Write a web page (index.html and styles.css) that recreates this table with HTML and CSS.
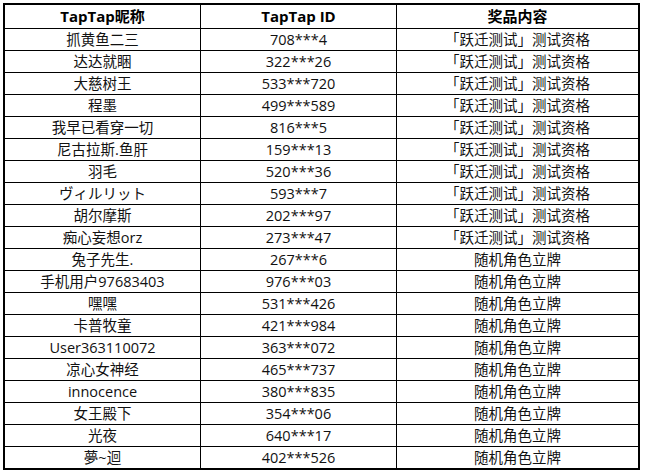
FILE: index.html
```html
<!DOCTYPE html>
<html>
<head>
<meta charset="utf-8">
<link rel="stylesheet" href="styles.css">
</head>
<body>
<table class="prize">
  <thead>
    <tr><th class="c1">TapTap昵称</th><th class="c2">TapTap ID</th><th class="c3">奖品内容</th></tr>
  </thead>
  <tbody>
    <tr><td>抓黄鱼二三</td><td>708***4</td><td>「跃迁测试」测试资格</td></tr>
    <tr><td>达达就睏</td><td>322***26</td><td>「跃迁测试」测试资格</td></tr>
    <tr><td>大慈树王</td><td>533***720</td><td>「跃迁测试」测试资格</td></tr>
    <tr><td>程墨</td><td>499***589</td><td>「跃迁测试」测试资格</td></tr>
    <tr><td>我早已看穿一切</td><td>816***5</td><td>「跃迁测试」测试资格</td></tr>
    <tr><td>尼古拉斯.鱼肝</td><td>159***13</td><td>「跃迁测试」测试资格</td></tr>
    <tr><td>羽毛</td><td>520***36</td><td>「跃迁测试」测试资格</td></tr>
    <tr><td>ヴィルリット</td><td>593***7</td><td>「跃迁测试」测试资格</td></tr>
    <tr><td>胡尔摩斯</td><td>202***97</td><td>「跃迁测试」测试资格</td></tr>
    <tr><td>痴心妄想orz</td><td>273***47</td><td>「跃迁测试」测试资格</td></tr>
    <tr><td>兔子先生.</td><td>267***6</td><td>随机角色立牌</td></tr>
    <tr><td>手机用户97683403</td><td>976***03</td><td>随机角色立牌</td></tr>
    <tr><td>嘿嘿</td><td>531***426</td><td>随机角色立牌</td></tr>
    <tr><td>卡普牧童</td><td>421***984</td><td>随机角色立牌</td></tr>
    <tr><td>User363110072</td><td>363***072</td><td>随机角色立牌</td></tr>
    <tr><td>凉心女神经</td><td>465***737</td><td>随机角色立牌</td></tr>
    <tr><td>innocence</td><td>380***835</td><td>随机角色立牌</td></tr>
    <tr><td>女王殿下</td><td>354***06</td><td>随机角色立牌</td></tr>
    <tr><td>光夜</td><td>640***17</td><td>随机角色立牌</td></tr>
    <tr><td>夢~迴</td><td>402***526</td><td>随机角色立牌</td></tr>
  </tbody>
</table>
</body>
</html>
```
FILE: styles.css
```css
body {
  margin: 0;
  background: #fff;
}
.prize {
  margin: 3px 0 0 3px;
  border: 2px solid #000;
  border-collapse: separate;
  border-spacing: 0;
  table-layout: fixed;
  width: 637px;
  font-family: "Open Sans", "Noto Sans CJK SC", sans-serif;
  font-size: 14.5px;
  color: #111;
}
.prize th,
.prize td {
  padding: 0;
  text-align: center;
  vertical-align: middle;
  white-space: nowrap;
  overflow: hidden;
  border-right: 1px solid #000;
  border-bottom: 1px solid #000;
  line-height: 21px;
  height: 21px;
}
.prize th {
  font-weight: 700;
  font-size: 15px;
  height: 23px;
  line-height: 23px;
  color: #000;
}
.prize th:last-child,
.prize td:last-child {
  border-right: none;
}
.prize tbody tr:last-child td {
  border-bottom: none;
}
.c1 { width: 195px; }
.c2 { width: 195px; }
.c3 { width: 241px; }
```
